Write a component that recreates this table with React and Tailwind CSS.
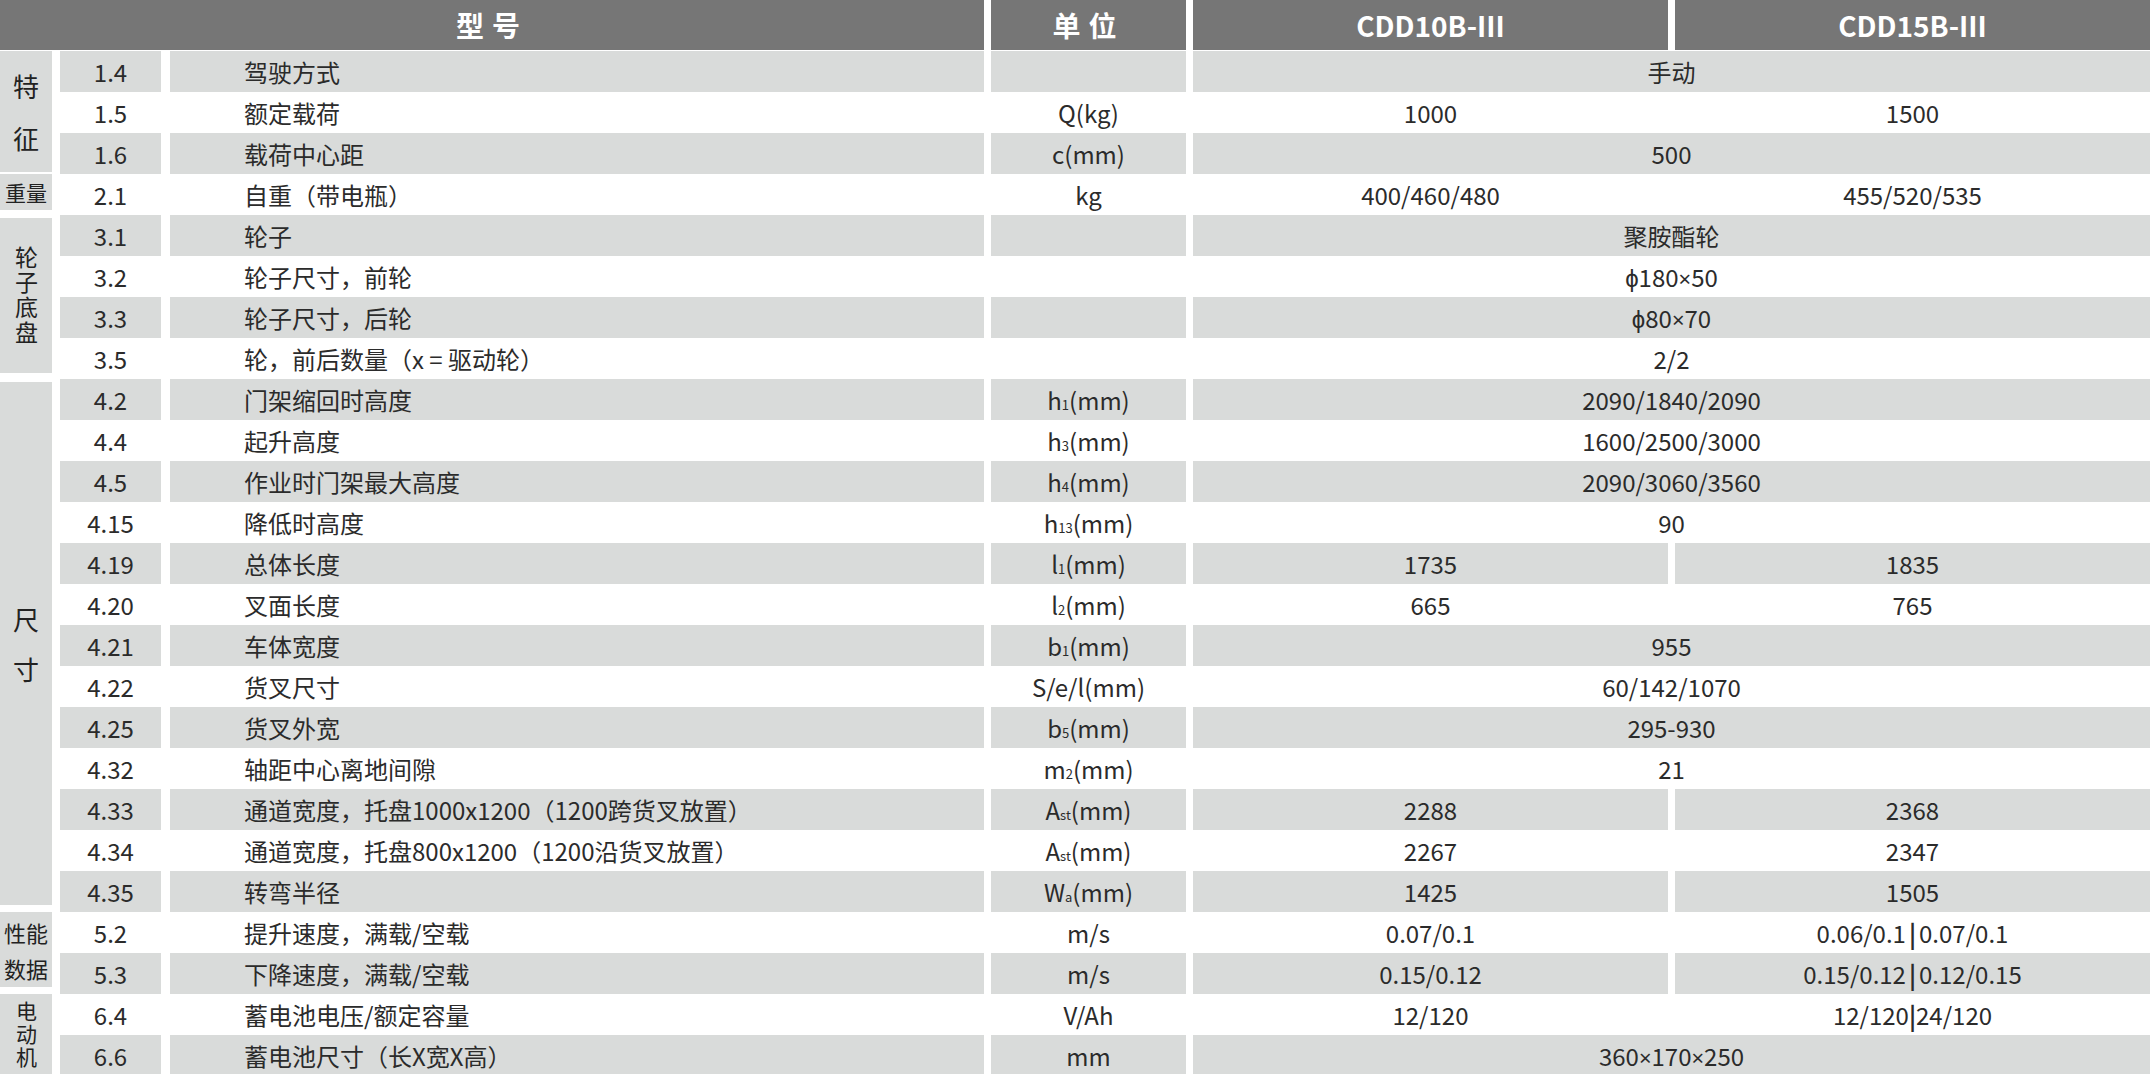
const Sub = ({ base, sub, tail = "(mm)" }) => (
  <span>
    {base}
    <span className="text-[13px]">{sub}</span>
    {tail}
  </span>
);

// narrow multiplication sign, like the print original
const fmt = (v) => {
  if (typeof v !== "string" || !v.includes("×")) return v;
  const parts = v.split("×");
  return parts.map((p, i) => (
    <span key={i}>
      {p}
      {i < parts.length - 1 && <span className="font-['Noto_Sans',sans-serif] text-[22px]">×</span>}
    </span>
  ));
};

const groups = [
  {
    label: (
      <div className="flex flex-col items-center gap-[26px] text-[26px] leading-none">
        <span>特</span>
        <span>征</span>
      </div>
    ),
    cls: "mt-0 mb-[2px]",
    rows: [
      { no: "1.4", name: "驾驶方式", unit: "", span: "手动" },
      { no: "1.5", name: "额定载荷", unit: "Q(kg)", v1: "1000", v2: "1500" },
      { no: "1.6", name: "载荷中心距", unit: "c(mm)", span: "500" },
    ],
  },
  {
    label: <div className="text-[21px] leading-none">重量</div>,
    cls: "mt-0 mb-[5px]",
    rows: [
      { no: "2.1", name: "自重（带电瓶）", unit: "kg", v1: "400/460/480", v2: "455/520/535" },
    ],
  },
  {
    label: (
      <div className="[writing-mode:vertical-rl] text-[23px] tracking-[2px] leading-none">轮子底盘</div>
    ),
    cls: "mt-[3px] mb-[6px]",
    rows: [
      { no: "3.1", name: "轮子", unit: "", span: "聚胺酯轮" },
      { no: "3.2", name: "轮子尺寸，前轮", unit: "", span: "ϕ180×50" },
      { no: "3.3", name: "轮子尺寸，后轮", unit: "", span: "ϕ80×70" },
      { no: "3.5", name: "轮，前后数量（x = 驱动轮）", unit: "", span: "2/2" },
    ],
  },
  {
    label: (
      <div className="flex flex-col items-center gap-[24px] text-[26px] leading-none">
        <span>尺</span>
        <span>寸</span>
      </div>
    ),
    cls: "mt-[3px] mb-[7px]",
    rows: [
      { no: "4.2", name: "门架缩回时高度", unit: <Sub base="h" sub="1" />, span: "2090/1840/2090" },
      { no: "4.4", name: "起升高度", unit: <Sub base="h" sub="3" />, span: "1600/2500/3000" },
      { no: "4.5", name: "作业时门架最大高度", unit: <Sub base="h" sub="4" />, span: "2090/3060/3560" },
      { no: "4.15", name: "降低时高度", unit: <Sub base="h" sub="13" />, span: "90" },
      { no: "4.19", name: "总体长度", unit: <Sub base="l" sub="1" />, v1: "1735", v2: "1835" },
      { no: "4.20", name: "叉面长度", unit: <Sub base="l" sub="2" />, v1: "665", v2: "765" },
      { no: "4.21", name: "车体宽度", unit: <Sub base="b" sub="1" />, span: "955" },
      { no: "4.22", name: "货叉尺寸", unit: "S/e/l(mm)", span: "60/142/1070" },
      { no: "4.25", name: "货叉外宽", unit: <Sub base="b" sub="5" />, span: "295-930" },
      { no: "4.32", name: "轴距中心离地间隙", unit: <Sub base="m" sub="2" />, span: "21" },
      { no: "4.33", name: "通道宽度，托盘1000x1200（1200跨货叉放置）", unit: <Sub base="A" sub="st" />, v1: "2288", v2: "2368" },
      { no: "4.34", name: "通道宽度，托盘800x1200（1200沿货叉放置）", unit: <Sub base="A" sub="st" />, v1: "2267", v2: "2347" },
      { no: "4.35", name: "转弯半径", unit: <Sub base="W" sub="a" />, v1: "1425", v2: "1505" },
    ],
  },
  {
    label: (
      <div className="flex flex-col items-center text-[22px] leading-[36px]">
        <span>性能</span>
        <span>数据</span>
      </div>
    ),
    cls: "mt-0 mb-[7px]",
    rows: [
      {
        no: "5.2",
        name: "提升速度，满载/空载",
        unit: "m/s",
        v1: "0.07/0.1",
        v2: (
          <span>
            0.06/0.1<span className="mx-[3px] font-bold">|</span>0.07/0.1
          </span>
        ),
      },
      {
        no: "5.3",
        name: "下降速度，满载/空载",
        unit: "m/s",
        v1: "0.15/0.12",
        v2: (
          <span>
            0.15/0.12<span className="mx-[3px] font-bold">|</span>0.12/0.15
          </span>
        ),
      },
    ],
  },
  {
    label: (
      <div className="[writing-mode:vertical-rl] text-[21px] tracking-[2px] leading-none">电动机</div>
    ),
    cls: "mt-0 mb-0",
    rows: [
      {
        no: "6.4",
        name: "蓄电池电压/额定容量",
        unit: "V/Ah",
        v1: "12/120",
        v2: (
          <span>
            12/120<span className="font-bold">|</span>24/120
          </span>
        ),
      },
      { no: "6.6", name: "蓄电池尺寸（长X宽X高）", unit: "mm", span: "360×170×250" },
    ],
  },
];

function Row({ row, gray }) {
  const bg = gray ? "bg-[#d9dbda]" : "bg-white";
  return (
    <div className="flex h-[41px] items-stretch">
      <div className={`w-[101px] flex items-center justify-center ${bg}`}>{row.no}</div>
      <div className={`ml-[9px] w-[814px] flex items-center pl-[74px] ${bg}`}>{row.name}</div>
      <div className={`ml-[7px] w-[195px] flex items-center justify-center ${bg}`}>{row.unit}</div>
      {row.span !== undefined ? (
        <div className={`ml-[7px] w-[957px] flex items-center justify-center ${bg}`}>{fmt(row.span)}</div>
      ) : (
        <>
          <div className={`ml-[7px] w-[475px] flex items-center justify-center ${bg}`}>{fmt(row.v1)}</div>
          <div className={`ml-[7px] w-[475px] flex items-center justify-center ${bg}`}>{fmt(row.v2)}</div>
        </>
      )}
    </div>
  );
}

export default function App() {
  let idx = 0;
  return (
    <div className="w-[2150px] h-[1074px] overflow-hidden bg-white text-[#2b2b2b] text-[24px] font-['Noto_Sans_CJK_SC',sans-serif]">
      {/* header */}
      <div className="flex h-[50px] mb-[1px] text-white font-bold text-[28px] bg-white">
        <div className="w-[984px] bg-[#767676] flex items-center justify-center tracking-[8px]">型号</div>
        <div className="ml-[7px] w-[195px] bg-[#767676] flex items-center justify-center tracking-[8px]">单位</div>
        <div className="ml-[7px] w-[475px] bg-[#767676] flex items-center justify-center">CDD10B-III</div>
        <div className="ml-[7px] w-[475px] bg-[#767676] flex items-center justify-center">CDD15B-III</div>
      </div>
      {/* body */}
      {groups.map((g, gi) => (
        <div key={gi} className="flex">
          <div className="w-[52px] flex">
            <div className={`flex-1 bg-[#d9dbda] flex items-center justify-center text-[#222] ${g.cls}`}>
              {g.label}
            </div>
          </div>
          <div className="ml-[8px] flex flex-col">
            {g.rows.map((r) => {
              const gray = idx % 2 === 0;
              idx++;
              return <Row key={r.no} row={r} gray={gray} />;
            })}
          </div>
        </div>
      ))}
    </div>
  );
}
